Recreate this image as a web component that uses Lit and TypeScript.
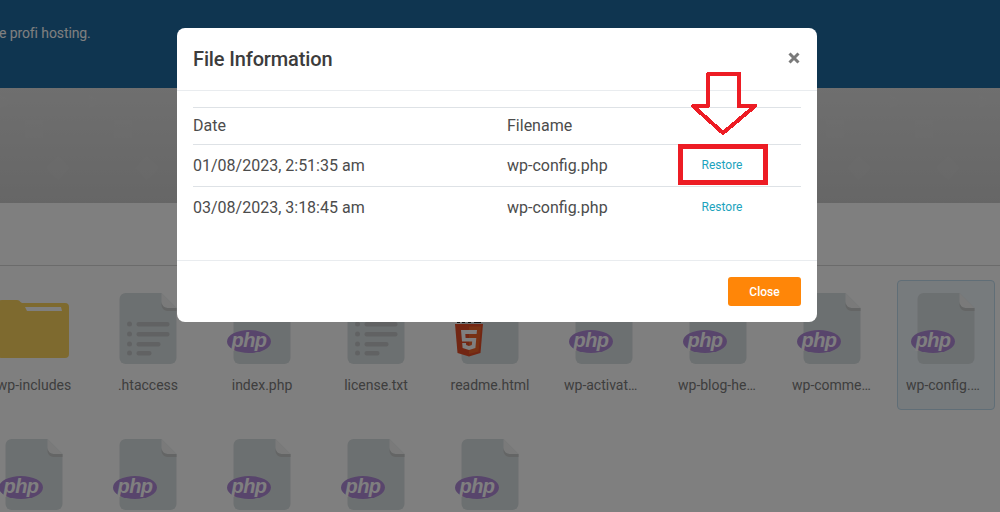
import { LitElement, html, css, svg } from "lit";
import { customElement } from "lit/decorators.js";

const fileShape = svg`
  <path d="M6 0H42L57 15V65a6 6 0 0 1-6 6H6a6 6 0 0 1-6-6V6a6 6 0 0 1 6-6Z" fill="#d9e0e2"/>
  <path d="M42 0L57 15H48a6 6 0 0 1-6-6Z" fill="#f4f5f5"/>
  <path d="M42 9a6 6 0 0 0 6 6h9v3h-9a6 6 0 0 1-6-6Z" fill="#c8caca"/>`;

const plainFile = html`<svg class="file" viewBox="-0.5 0 58 71" width="58" height="71">${fileShape}</svg>`;

const txtFile = html`<svg class="file" viewBox="-0.5 0 58 71" width="58" height="71">
  ${fileShape}
  <g fill="#c2c5c7">
    <circle cx="10" cy="31" r="2.5"/><circle cx="10" cy="41" r="2.5"/><circle cx="10" cy="51" r="2.5"/><circle cx="10" cy="60" r="2.5"/>
    <rect x="17" y="29" width="33" height="4.5" rx="2"/><rect x="17" y="39" width="33" height="4.5" rx="2"/>
    <rect x="17" y="49" width="24" height="4.5" rx="2"/><rect x="17" y="58" width="15" height="4.5" rx="2"/>
  </g></svg>`;

const phpBadge = html`<svg class="badge php" viewBox="0 0 44 23" width="44" height="23">
  <ellipse cx="22" cy="11.500" rx="22" ry="11.500" fill="#b08ad8"/>
  <text class="phptext" x="22" y="17" text-anchor="middle">php</text></svg>`;

const htmlBadge = html`<svg class="badge h5" viewBox="0 0 30 40" width="30" height="40">
  <rect x="3" y="0" width="3" height="6" fill="#222"/><rect x="8" y="0" width="3" height="6" fill="#222"/>
  <rect x="14" y="0" width="3" height="6" fill="#222"/><rect x="20" y="0" width="7" height="6" fill="#222"/>
  <path d="M1 7H29L26.500 36L15 39.500L3.500 36Z" fill="#e44d26"/>
  <path d="M15 9.500V37L24.500 34.500L27 9.500Z" fill="#f16529"/>
  <path d="M7 13H23L22.600 17H11.300L11.600 21H22.300L21.400 31L15 33L8.600 31L8.200 26H12L12.200 28L15 29L17.800 28L18.200 24.500H8Z" fill="#fff"/></svg>`;

type Item = { name: string; kind: "folder" | "txt" | "php" | "html"; sel?: boolean };

const items: Item[] = [
  { name: "wp-includes", kind: "folder" },
  { name: ".htaccess", kind: "txt" },
  { name: "index.php", kind: "php" },
  { name: "license.txt", kind: "txt" },
  { name: "readme.html", kind: "html" },
  { name: "wp-activate.php", kind: "php" },
  { name: "wp-blog-header.php", kind: "php" },
  { name: "wp-comments-post.php", kind: "php" },
  { name: "wp-config.php", kind: "php", sel: true },
  { name: "", kind: "php" },
  { name: "", kind: "php" },
  { name: "", kind: "php" },
  { name: "", kind: "php" },
  { name: "", kind: "php" },
];

@customElement("app-root")
export class AppRoot extends LitElement {
  static styles = css`
    :host {
      display: block;
      width: 1000px;
      height: 512px;
      overflow: hidden;
      position: relative;
      font-family: Roboto, "Liberation Sans", sans-serif;
      background: #fff;
    }
    .hero {
      height: 88px;
      background: #1e6aa0;
      color: #fff;
      font-size: 14px;
      padding: 25px 0 0 0;
      box-sizing: border-box;
      line-height: 16px;
      letter-spacing: -0.1px;
    }
    .hero span { display: block; margin-left: -1px; }
    .banner {
      height: 115px;
      display: block;
      width: 100%;
    }
    .toolbar {
      height: 63px;
      box-sizing: border-box;
      border-bottom: 1px solid #d6d6d6;
    }
    .grid {
      display: grid;
      grid-template-columns: repeat(9, 98px);
      grid-auto-rows: 130px;
      gap: 16px;
      margin: 14px 0 0 -15px;
      width: 1100px;
    }
    .item {
      box-sizing: border-box;
      border: 1px solid transparent;
      border-radius: 4px;
      display: flex;
      flex-direction: column;
      align-items: center;
      padding-top: 12px;
      min-width: 0;
    }
    .item.sel {
      background: #eef6fb;
      border-color: #c0dcee;
    }
    .icon {
      position: relative;
      width: 58px;
      height: 71px;
      flex: none;
    }
    .file { display: block; }
    .folder { display: block; margin: 7px 0 0 -7px; }
    .badge { position: absolute; display: block; }
    .php { left: -6px; top: 37px; }
    .h5 { left: -7px; top: 24px; }
    .phptext {
      font: italic bold 20px "Liberation Sans", sans-serif;
      letter-spacing: -0.5px;
      fill: #fff;
    }
    .label {
      margin-top: 13px;
      width: 80px;
      font-size: 14px;
      line-height: 17px;
      color: #7c7c7c;
      text-align: center;
      white-space: nowrap;
      overflow: hidden;
      text-overflow: ellipsis;
    }
    .scrim {
      position: absolute;
      inset: 0;
      background: rgba(0, 0, 0, 0.5);
    }
    .modal {
      position: absolute;
      left: 177px;
      top: 28px;
      width: 640px;
      height: 294px;
      background: #fff;
      border-radius: 8px;
      display: flex;
      flex-direction: column;
      color: #444;
    }
    .head {
      height: 63px;
      box-sizing: border-box;
      border-bottom: 1px solid #e9ecef;
      padding: 0 16px;
      display: flex;
      align-items: center;
      justify-content: space-between;
    }
    .title {
      font-size: 20px;
      font-weight: 500;
      color: #3c3c3c;
      margin-top: -1px;
      letter-spacing: -0.14px;
    }
    .x { display: block; margin-top: -3px; margin-right: 1px; }
    .body {
      flex: 1;
      padding: 16px 16px 0;
    }
    .row {
      display: grid;
      grid-template-columns: 314px 157px 1fr;
      align-items: center;
      border-top: 1px solid #dee2e6;
      font-size: 16px;
      color: #4c4c4c;
      height: 42px;
      box-sizing: border-box;
    }
    .row.th { height: 37px; padding-bottom: 2px; }
    .restore {
      font-size: 12px;
      color: #1ca3bd;
      text-align: center;
      width: 88px;
      margin: -2px 0 0 14px;
    }
    .foot {
      height: 62px;
      box-sizing: border-box;
      border-top: 1px solid #e9ecef;
      padding: 0 16px;
      display: flex;
      align-items: center;
      justify-content: flex-end;
    }
    .close {
      width: 73px;
      height: 29px;
      border: 0;
      border-radius: 3px;
      background: #ff8608;
      color: #fff;
      font: 500 12px Roboto, sans-serif;
      padding: 0;
    }
    .mark {
      position: absolute;
      left: 678px;
      top: 144px;
      width: 90px;
      height: 41px;
      box-sizing: border-box;
      border: 5px solid #ed1c24;
    }
    .arrow {
      position: absolute;
      left: 685px;
      top: 68px;
      display: block;
    }
  `;

  private icon(i: Item) {
    if (i.kind === "folder") {
      return html`<div class="icon"><svg class="folder" viewBox="0 0 71 58" width="71" height="58">
        <path d="M4 0H19a4 4 0 0 1 3.500 2L24 3H67a4 4 0 0 1 4 4V54a4 4 0 0 1-4 4H4a4 4 0 0 1-4-4V4a4 4 0 0 1 4-4Z" fill="#fdd45f"/>
        <path d="M27 7H63L64 11H29Z" fill="#fff"/></svg></div>`;
    }
    return html`<div class="icon">
      ${i.kind === "txt" ? txtFile : plainFile}
      ${i.kind === "php" ? phpBadge : ""}
      ${i.kind === "html" ? htmlBadge : ""}
    </div>`;
  }

  render() {
    return html`
      <div class="hero"><span>e profi hosting.</span></div>
      <svg class="banner" viewBox="0 0 1000 115" preserveAspectRatio="none">
        <defs>
          <linearGradient id="g" x1="0" y1="0" x2="0" y2="1">
            <stop offset="0" stop-color="#dedede"/><stop offset="1" stop-color="#cdcdcd"/>
          </linearGradient>
          <pattern id="p" width="89" height="115" patternUnits="userSpaceOnUse">
            <path d="M0 7L13 14L0 20Z" fill="#fff" opacity=".03"/>
            <rect x="25" y="32" width="18" height="18" fill="#fff" opacity=".03"/>
            <path d="M58 68L70 80L58 92L46 80Z" fill="#fff" opacity=".04"/>
          </pattern>
        </defs>
        <rect width="1000" height="115" fill="url(#g)"/>
        <rect width="1000" height="115" fill="url(#p)"/>
      </svg>
      <div class="toolbar"></div>
      <div class="grid">
        ${items.map(
          (i) => html`<div class="item ${i.sel ? "sel" : ""}">
            ${this.icon(i)}
            ${i.name ? html`<div class="label">${i.name}</div>` : ""}
          </div>`
        )}
      </div>
      <div class="scrim"></div>
      <div class="modal">
        <div class="head">
          <div class="title">File Information</div>
          <svg class="x" viewBox="0 0 12 12" width="12" height="12"><path d="M1.500 1.500L10.500 10.500M10.500 1.500L1.500 10.500" stroke="#7a7a7a" stroke-width="3"/></svg>
        </div>
        <div class="body">
          <div class="row th"><span>Date</span><span>Filename</span><span></span></div>
          <div class="row"><span>01/08/2023, 2:51:35 am</span><span>wp-config.php</span><span class="restore">Restore</span></div>
          <div class="row"><span>03/08/2023, 3:18:45 am</span><span>wp-config.php</span><span class="restore">Restore</span></div>
        </div>
        <div class="foot"><button class="close">Close</button></div>
      </div>
      <div class="mark"></div>
      <svg class="arrow" viewBox="0 0 76 72" width="76" height="72">
        <path d="M23 6H54V38H70L38 65L8 38H23Z" fill="none" stroke="#ed1c24" stroke-width="4" stroke-linejoin="round" shape-rendering="crispEdges"/>
      </svg>
    `;
  }
}
